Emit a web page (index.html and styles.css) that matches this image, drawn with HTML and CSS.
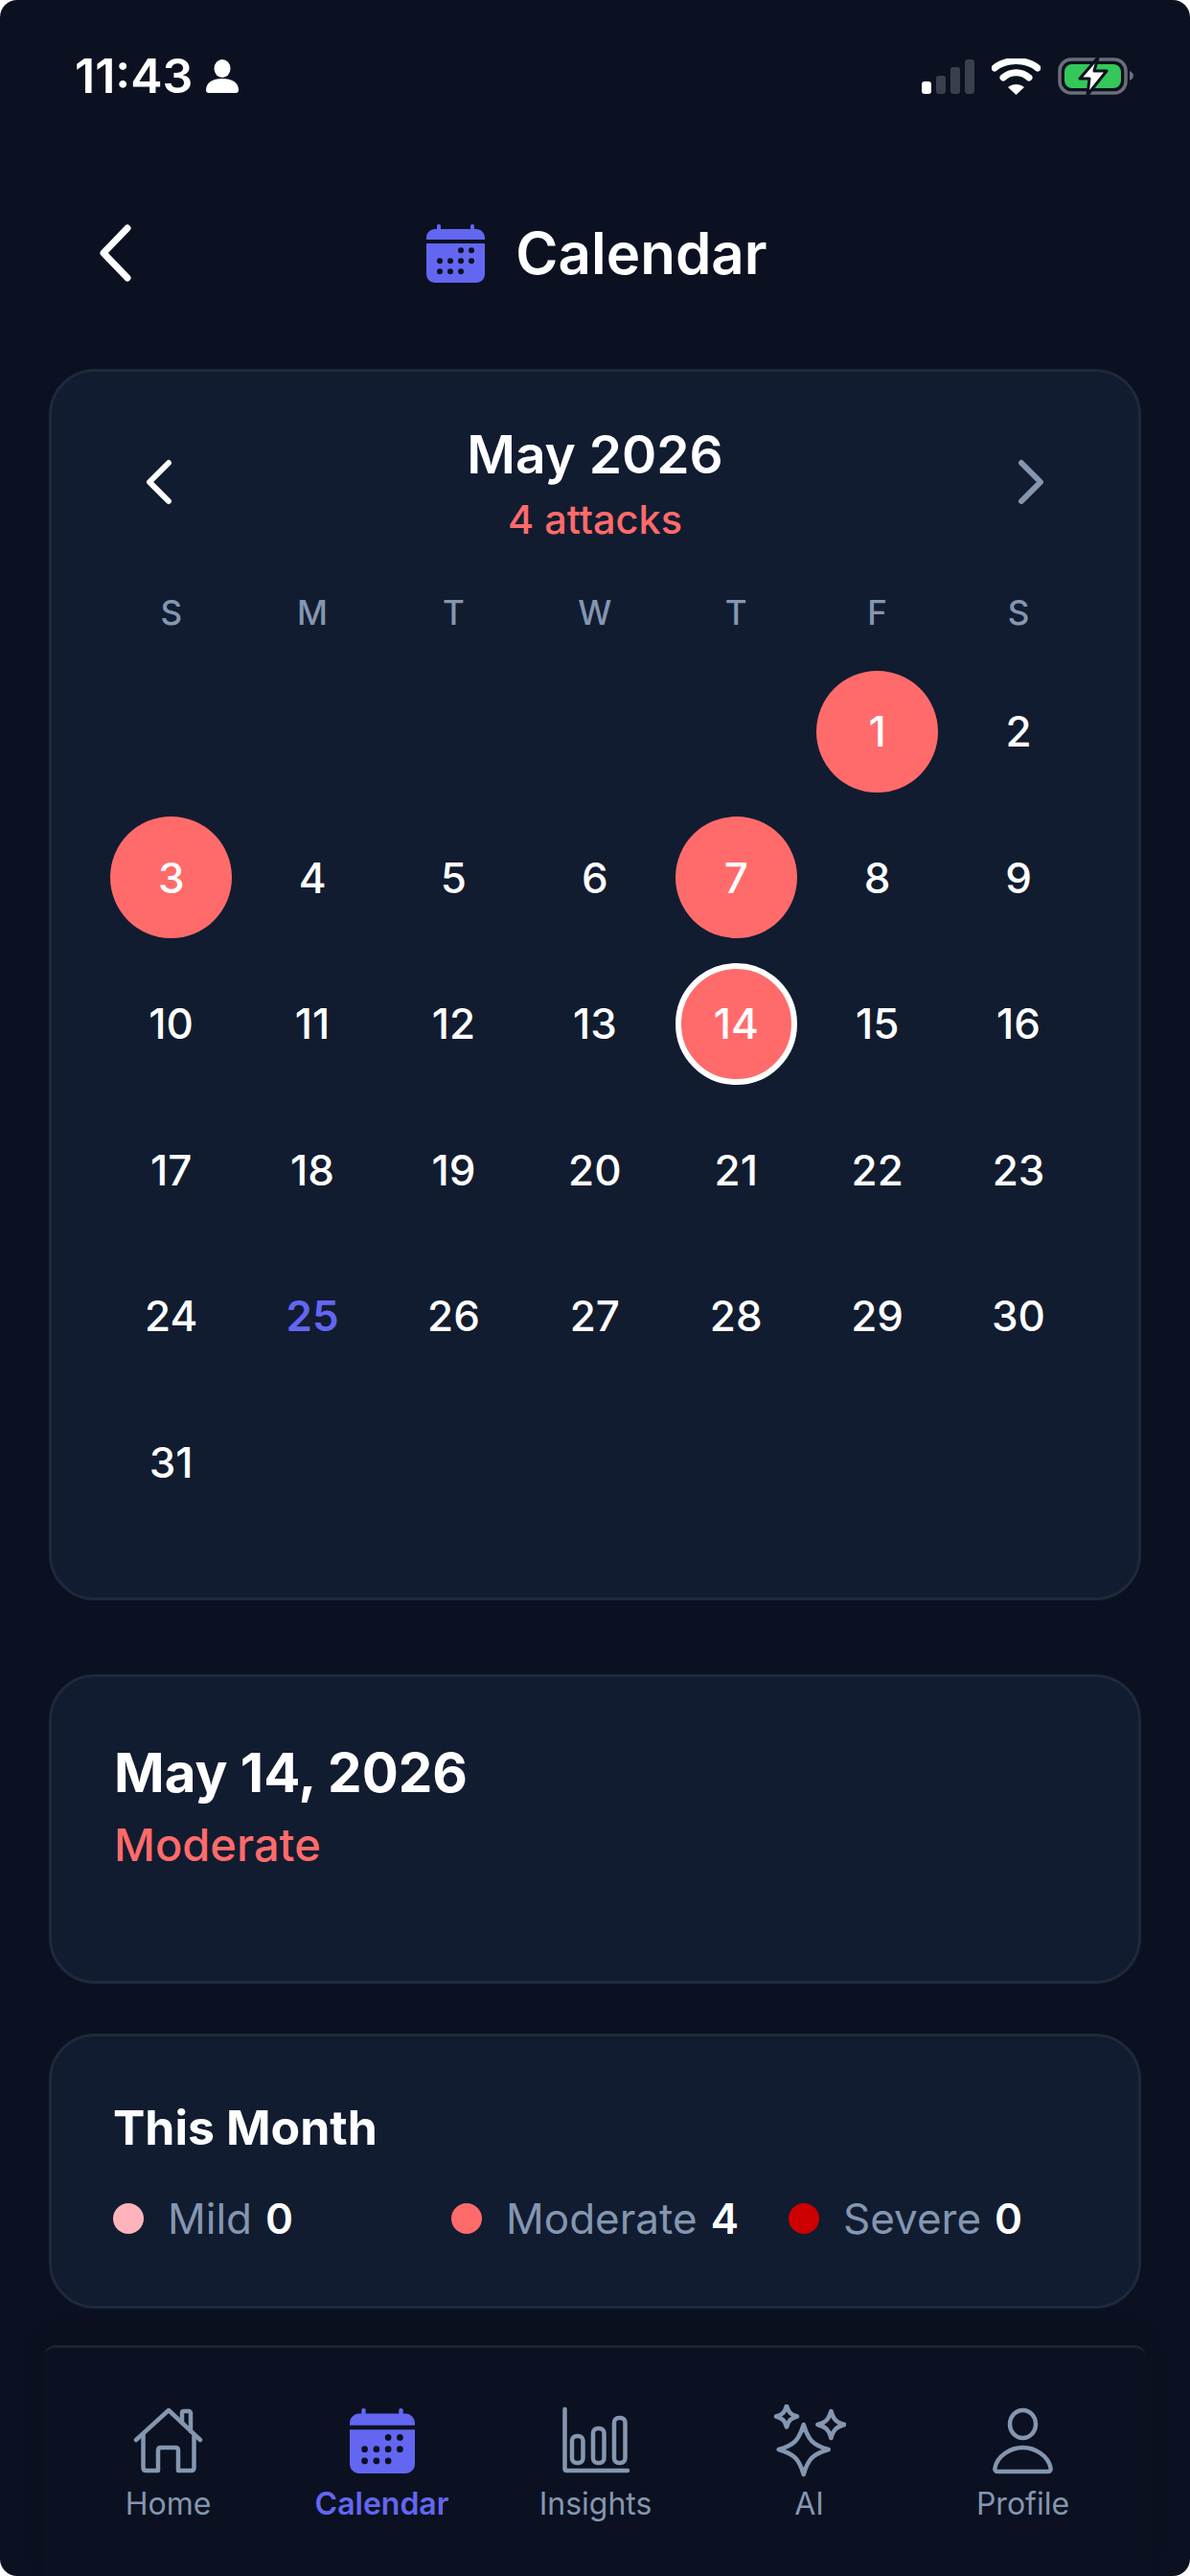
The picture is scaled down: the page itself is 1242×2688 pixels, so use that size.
FILE: index.html
```html
<!DOCTYPE html>
<html lang="en">

<head>
    <meta charset="UTF-8" />
    <meta name="viewport" content="width=device-width, initial-scale=1.0" />
    <title>Calendar</title>
    <link rel="stylesheet" href="styles.css">
</head>

<body>
    <svg class="defs" width="0" height="0">
        <defs>
            <g id="calendar-glyph">
                <path d="M13 0c1.300 0 2 .8 2 2v3h31V2c0-1.200.7-2 2-2s2 .8 2 2v3h2c5 0 9 4 9 9v2H0v-2c0-5 4-9 9-9h2V2c0-1.200.7-2 2-2z" fill="#6366f1"/>
                <path d="M0 20h61v32c0 5-4 9-9 9H9c-5 0-9-4-9-9z" fill="#6366f1"/>
                <g fill="#0b1120"><circle cx="36" cy="27.300" r="3"/><circle cx="47" cy="27.300" r="3"/><circle cx="14" cy="38.300" r="3"/><circle cx="25" cy="38.300" r="3"/><circle cx="36" cy="38.300" r="3"/><circle cx="47" cy="38.300" r="3"/><circle cx="14" cy="49.300" r="3"/><circle cx="25" cy="49.300" r="3"/><circle cx="36" cy="49.300" r="3"/></g>
            </g>
        </defs>
    </svg>

    <div class="screen">
        <div class="status-bar">
            <div class="status-left">
                <span class="clock">11:43</span>
                <svg class="status-person" viewBox="0 0 34 35"><ellipse cx="17" cy="9.500" rx="8.500" ry="9.500" fill="#fff"/><path d="M0 32c0-8 7-12 17-12s17 4 17 12c0 2-1 3-3 3H3c-2 0-3-1-3-3z" fill="#fff"/></svg>
            </div>
            <div class="status-right">
                <svg class="signal" viewBox="0 0 55 36">
                    <rect x="0" y="23" width="10" height="13" rx="3" fill="#fff"/>
                    <rect x="15" y="17" width="10" height="19" rx="3" fill="#3a3f4d"/>
                    <rect x="30" y="8" width="10" height="28" rx="3" fill="#3a3f4d"/>
                    <rect x="45" y="0" width="10" height="36" rx="3" fill="#3a3f4d"/>
                </svg>
                <svg class="wifi" viewBox="0 0 51 38">
                    <path d="M3 10C15 0 36 0 48 10" fill="none" stroke="#fff" stroke-width="7" stroke-linecap="round"/>
                    <path d="M12 20C20 13 31 13 39 20" fill="none" stroke="#fff" stroke-width="7" stroke-linecap="round"/>
                    <path d="M17 30c5-4 12-4 17 0l-8.500 8z" fill="#fff"/>
                </svg>
                <svg class="battery" viewBox="0 -1 79 41">
                    <rect x="2" y="2" width="69" height="35" rx="12" fill="none" stroke="#6b6e78" stroke-width="3.500"/>
                    <rect x="7" y="7" width="59" height="25" rx="8" fill="#34c759"/>
                    <path d="M75 14c2.500 1 4 3 4 5s-1.500 4-4 5z" fill="#6b6e78"/>
                    <path d="M42 0L23 22h10l-2 17 20-25H38z" fill="#fff" stroke="#0b1120" stroke-width="3" stroke-linejoin="round"/>
                </svg>
            </div>
        </div>

        <header class="page-header">
            <svg class="back-icon" viewBox="0 0 40 60"><path d="M33 4L8 30l25 26" fill="none" stroke="#fff" stroke-width="7" stroke-linecap="round" stroke-linejoin="round"/></svg>
            <div class="page-title">
                <svg class="cal-icon" viewBox="0 0 61 61"><use href="#calendar-glyph"/></svg>
                <h1>Calendar</h1>
            </div>
        </header>

        <main class="content">
            <section class="card month-card">
                <div class="month-head">
                    <svg class="month-arrow" viewBox="0 0 32 48"><path d="M26 4L6 24l20 20" fill="none" stroke="#fff" stroke-width="6" stroke-linecap="round" stroke-linejoin="round"/></svg>
                    <div class="month-label">
                        <h2>May 2026</h2>
                        <p>4 attacks</p>
                    </div>
                    <svg class="month-arrow" viewBox="0 0 32 48"><path d="M6 4l20 20L6 44" fill="none" stroke="#8496b0" stroke-width="6" stroke-linecap="round" stroke-linejoin="round"/></svg>
                </div>
                <div class="week-row">
                    <span>S</span><span>M</span><span>T</span><span>W</span><span>T</span><span>F</span><span>S</span>
                </div>
                <div class="day-grid" id="days"></div>
            </section>

            <section class="card detail-card">
                <h3>May 14, 2026</h3>
                <p>Moderate</p>
            </section>

            <section class="card summary-card">
                <h4>This Month</h4>
                <div class="legend">
                    <div class="legend-item item-mild"><i class="dot dot-mild"></i><span>Mild</span><b>0</b></div>
                    <div class="legend-item item-moderate"><i class="dot dot-moderate"></i><span>Moderate</span><b>4</b></div>
                    <div class="legend-item"><i class="dot dot-severe"></i><span>Severe</span><b>0</b></div>
                </div>
            </section>
        </main>

        <nav class="tab-bar">
            <a class="tab">
                <svg viewBox="-2 -4 76 76" fill="none" stroke="#8496b0" stroke-width="4.500" stroke-linecap="round" stroke-linejoin="round">
                    <path d="M2 33L36 2l33 31"/>
                    <path d="M50 15V5c0-1 .5-2 2-2h5c1 0 2 1 2 2v19"/>
                    <path d="M9.500 27v35c0 2 1 3 3 3H25V44c0-2 1-3 3-3h15c2 0 3 1 3 3v21h13.500c2 0 3-1 3-3V27"/>
                </svg>
                <span>Home</span>
            </a>
            <a class="tab tab-active">
                <svg viewBox="-4 -4 76 76"><use href="#calendar-glyph" transform="scale(1.115)"/></svg>
                <span>Calendar</span>
            </a>
            <a class="tab">
                <svg viewBox="2 0 76 76" fill="none" stroke="#8496b0" stroke-width="4.500" stroke-linecap="round" stroke-linejoin="round">
                    <path d="M7.500 5v62c0 1.500.7 2 2 2H73"/>
                    <rect x="15" y="33" width="11.500" height="28" rx="5"/>
                    <rect x="37" y="25" width="11.500" height="36" rx="5"/>
                    <rect x="59" y="14" width="11.500" height="47" rx="5"/>
                </svg>
                <span>Insights</span>
            </a>
            <a class="tab">
                <svg viewBox="0 0 76 76" fill="none" stroke="#8496b0" stroke-width="4.500" stroke-linejoin="round">
                    <path class="star" transform="translate(31.700 47) scale(26)" d="M0-1C.18-.38.38-.18 1 0 .38.18.18.38 0 1-.18.38-.38.18-1 0-.38-.18-.18-.38 0-1Z"/>
                    <path class="star" transform="translate(14 12.500) scale(11)" d="M0-1C.18-.38.38-.18 1 0 .38.18.18.38 0 1-.18.38-.38.18-1 0-.38-.18-.18-.38 0-1Z"/>
                    <path class="star" transform="translate(60.400 21) scale(14)" d="M0-1C.18-.38.38-.18 1 0 .38.18.18.38 0 1-.18.38-.38.18-1 0-.38-.18-.18-.38 0-1Z"/>
                </svg>
                <span>AI</span>
            </a>
            <a class="tab">
                <svg viewBox="0 0 76 76" fill="none" stroke="#8496b0" stroke-width="4.500" stroke-linecap="round" stroke-linejoin="round">
                    <ellipse cx="37.500" cy="20.500" rx="13.500" ry="14.500"/>
                    <path d="M11 70c-2 0-3-2-2.500-4C11 54 24 45 37.500 45S64 54 66.500 66c.5 2-.5 4-2.500 4z"/>
                </svg>
                <span>Profile</span>
            </a>
        </nav>
    </div>

    <script>
        // May 2026 starts on a Friday
        const attacks = [1, 3, 7, 14];
        const selected = 14;
        const today = 25;
        const days = document.getElementById("days");

        for (let i = 0; i < 5; i++) {
            days.appendChild(document.createElement("div")).className = "day";
        }

        for (let d = 1; d <= 31; d++) {
            const cell = document.createElement("div");
            cell.className = "day";
            const num = document.createElement("span");
            num.className = "day-num";
            if (attacks.includes(d)) num.classList.add("day-attack");
            if (d === selected) num.classList.add("day-selected");
            if (d === today) num.classList.add("day-today");
            num.textContent = d;
            cell.appendChild(num);
            days.appendChild(cell);
        }
    </script>
</body>

</html>
```

FILE: styles.css
```css
* {
    box-sizing: border-box;
}

html,
body {
    margin: 0;
    padding: 0;
    background-color: white;
}

body {
    font-family: Inter, "Liberation Sans", sans-serif;
    color: white;
}

h1,
h2,
h3,
h4,
p {
    margin: 0;
}

.defs {
    position: absolute;
}

.screen {
    width: 1242px;
    height: 2688px;
    overflow: hidden;
    display: flex;
    flex-direction: column;
    background-color: #0b1120;
    border-radius: 18px;
}

/* status bar */
.status-bar {
    height: 211px;
    padding: 52px 59px 0 78px;
    display: flex;
    justify-content: space-between;
    align-items: flex-start;
}

.status-left {
    display: flex;
    align-items: center;
    gap: 14px;
}

.clock {
    font-size: 50px;
    line-height: 54px;
    font-weight: 600;
}

.status-person {
    width: 34px;
    height: 35px;
}

.status-right {
    display: flex;
    align-items: center;
    gap: 18px;
    padding-top: 7px;
}

.signal {
    width: 55px;
    height: 36px;
}

.wifi {
    width: 51px;
    height: 38px;
}

.battery {
    width: 79px;
    height: 41px;
}

/* page header */
.page-header {
    position: relative;
    height: 106px;
    display: flex;
    justify-content: center;
    align-items: center;
}

.back-icon {
    position: absolute;
    left: 100px;
    top: 23px;
    width: 40px;
    height: 60px;
}

.page-title {
    display: flex;
    align-items: center;
    gap: 32px;
    padding-left: 4px;
}

.cal-icon {
    width: 61px;
    height: 61px;
}

.page-title h1 {
    font-size: 60px;
    line-height: 72px;
    font-weight: 600;
}

/* cards */
.content {
    flex: 1;
    padding: 68px 51px 0;
    display: flex;
    flex-direction: column;
}

.card {
    background-color: #111c30;
    border: 3px solid #1e293b;
    border-radius: 48px;
}

.month-card {
    height: 1285px;
    padding: 56px 0 0;
}

.month-head {
    display: flex;
    justify-content: space-between;
    align-items: center;
    padding: 0 96px 5px;
    height: 124px;
}

.month-arrow {
    width: 32px;
    height: 48px;
    margin-top: -2px;
}

.month-label {
    text-align: center;
}

.month-label h2 {
    font-size: 55px;
    line-height: 68px;
    font-weight: 600;
}

.month-label p {
    margin-top: 9px;
    font-size: 41.5px;
    line-height: 50px;
    font-weight: 450;
    color: #ff6b6b;
}

.week-row,
.day-grid {
    display: grid;
    grid-template-columns: repeat(7, 147.4px);
    padding: 0 51px;
}

.week-row {
    margin-top: 43px;
    height: 56px;
    align-items: center;
}

.week-row span {
    text-align: center;
    font-size: 35px;
    font-weight: 500;
    color: #8496b0;
}

.day-grid {
    margin-top: 20px;
    grid-auto-rows: 152.5px;
}

.day {
    display: flex;
    justify-content: center;
    align-items: center;
}

.day-num {
    width: 127px;
    height: 127px;
    border-radius: 50%;
    display: flex;
    justify-content: center;
    align-items: center;
    font-size: 44px;
    font-weight: 450;
}

.day-attack {
    background-color: #ff6b6b;
    font-weight: 500;
}

.day-selected {
    border: 6px solid white;
}

.day-today {
    color: #6366f1;
    font-weight: 600;
}

.detail-card {
    margin-top: 77px;
    height: 323px;
    padding: 66px 65px 0;
}

.detail-card h3 {
    font-size: 56.5px;
    line-height: 68px;
    font-weight: 700;
}

.detail-card p {
    margin-top: 13px;
    font-size: 47px;
    line-height: 56px;
    font-weight: 550;
    color: #ff6b6b;
}

.summary-card {
    margin-top: 52px;
    height: 287px;
    padding: 64px 64px 0;
}

.summary-card h4 {
    font-size: 50px;
    line-height: 62px;
    font-weight: 700;
}

.legend {
    margin-top: 37px;
    display: flex;
}

.legend-item {
    display: flex;
    align-items: center;
    font-size: 44px;
    line-height: 54px;
    color: #8496b0;
}

.item-mild {
    width: 353px;
}

.item-moderate {
    width: 352px;
}

.legend-item b {
    margin-left: 14px;
    font-weight: 600;
    color: white;
}

.dot {
    width: 32px;
    height: 32px;
    border-radius: 50%;
    margin-right: 25px;
}

.dot-mild {
    background-color: #ffb3ba;
}

.dot-moderate {
    background-color: #ff6b6b;
}

.dot-severe {
    background-color: #cc0000;
}

/* bottom tabs */
.tab-bar {
    margin: 0 46px;
    height: 241px;
    border-top: 3px solid #1a2332;
    border-radius: 12px 12px 0 0;
    padding: 59px 17px 0 18px;
    display: grid;
    grid-template-columns: repeat(5, 223px);
    box-shadow: 0 -12px 24px rgba(0, 0, 0, 0.12);
}

.tab {
    display: flex;
    flex-direction: column;
    align-items: center;
    height: 124px;
    font-size: 32px;
    line-height: 40px;
    color: #8496b0;
}

.tab svg {
    height: 76px;
    width: 76px;
    margin-bottom: 8px;
}

.star {
    vector-effect: non-scaling-stroke;
}

.tab-active {
    color: #6366f1;
    font-weight: 600;
}
```
